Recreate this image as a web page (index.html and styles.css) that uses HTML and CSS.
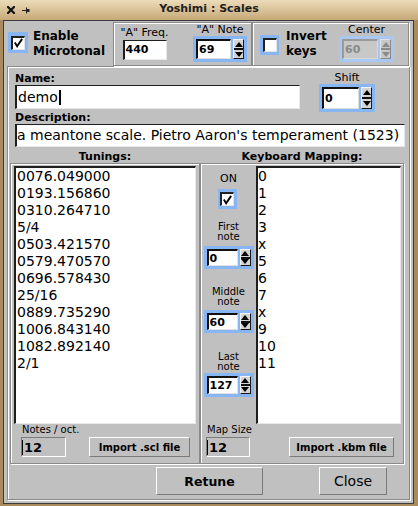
FILE: index.html
```
<!DOCTYPE html>
<html>
<head>
<meta charset="utf-8">
<link rel="stylesheet" href="styles.css">
</head>
<body>
<div class="titlebar">
  <div class="tb-icons">
    <svg class="tb-x" width="8" height="8" viewBox="0 0 8 8"><path d="M1 1L7 7M7 1L1 7" stroke="#111" stroke-width="2.2" stroke-linecap="square"/></svg>
    <svg class="tb-pin" width="8" height="7" viewBox="0 0 8 7"><path d="M0 3.5H4" stroke="#222" stroke-width="1"/><path d="M4.5 0.5V6.5" stroke="#222" stroke-width="1"/><rect x="5" y="2" width="2.5" height="3" fill="#222"/></svg>
  </div>
  <div class="title">Yoshimi : Scales</div>
  <div></div>
</div>
<div class="client">
  <div class="top">
    <div class="enable">
      <div class="cb cb-en"><div class="cbox"><svg width="12" height="12" viewBox="0 0 12 12"><path d="M2 5.5L4.5 9.5L10 1.5" stroke="#000" stroke-width="2" fill="none"/></svg></div></div>
      <div class="blbl">Enable<br>Microtonal</div>
    </div>
    <div class="grp grp1">
      <div class="freq">
        <div class="lbl">"A" Freq.</div>
        <div class="inp inp-freq">440</div>
      </div>
      <div class="note">
        <div class="lbl">"A" Note</div>
        <div class="spin spin-note"><div class="sv">69</div><div class="arr"><i class="u"></i><i class="d"></i></div></div>
      </div>
    </div>
    <div class="grp grp2">
      <div class="cb cb-inv"><div class="cbox"></div></div>
      <div class="blbl inv-lbl">Invert<br>keys</div>
      <div class="center">
        <div class="lbl">Center</div>
        <div class="spin spin-center dis"><div class="sv">60</div><div class="arr"><i class="u"></i><i class="d"></i></div></div>
      </div>
    </div>
  </div>

  <div class="panel">
    <div class="rowA">
      <div class="namecol">
        <div class="blbl2">Name:</div>
        <div class="inp name">demo<span class="caret"></span></div>
      </div>
      <div class="shiftcol">
        <div class="lbl">Shift</div>
        <div class="spin spin-shift"><div class="sv">0</div><div class="arr"><i class="u"></i><i class="d"></i></div></div>
      </div>
    </div>
    <div class="desc">
      <div class="blbl2">Description:</div>
      <div class="inp dinp">a meantone scale. Pietro Aaron's temperament (1523)</div>
    </div>

    <div class="cols">
      <div class="tcol">
        <div class="hdr">Tunings:</div>
        <div class="frame tframe">
          <div class="list tlist">
            <div>0076.049000</div>
            <div>0193.156860</div>
            <div>0310.264710</div>
            <div>5/4</div>
            <div>0503.421570</div>
            <div>0579.470570</div>
            <div>0696.578430</div>
            <div>25/16</div>
            <div>0889.735290</div>
            <div>1006.843140</div>
            <div>1082.892140</div>
            <div>2/1</div>
          </div>
          <div class="fbot tbot">
            <div class="outcol">
              <div class="lbl10">Notes / oct.</div>
              <div class="out"><span class="ocaret"></span>12</div>
            </div>
            <div class="btn ibtn scl">Import .scl file</div>
          </div>
        </div>
      </div>
      <div class="mcol">
        <div class="hdr">Keyboard Mapping:</div>
        <div class="frame mframe">
          <div class="mtop">
            <div class="midcol">
              <div class="lbl on-lbl">ON</div>
              <div class="cb cb-on"><div class="cbox"><svg width="12" height="12" viewBox="0 0 12 12"><path d="M2 5.5L4.5 9.5L10 1.5" stroke="#000" stroke-width="2" fill="none"/></svg></div></div>
              <div class="lbl10 nl nl-first">First<br>note</div>
              <div class="spin spin-sm s1"><div class="sv">0</div><div class="arr"><i class="u"></i><i class="d"></i></div></div>
              <div class="lbl10 nl nl-mid">Middle<br>note</div>
              <div class="spin spin-sm s2"><div class="sv">60</div><div class="arr"><i class="u"></i><i class="d"></i></div></div>
              <div class="lbl10 nl nl-last">Last<br>note</div>
              <div class="spin spin-sm s3"><div class="sv">127</div><div class="arr"><i class="u"></i><i class="d"></i></div></div>
            </div>
            <div class="list mlist">
              <div>0</div>
              <div>1</div>
              <div>2</div>
              <div>3</div>
              <div>x</div>
              <div>5</div>
              <div>6</div>
              <div>7</div>
              <div>x</div>
              <div>9</div>
              <div>10</div>
              <div>11</div>
            </div>
          </div>
          <div class="fbot mbot">
            <div class="outcol outcol-m">
              <div class="lbl10">Map Size</div>
              <div class="out"><span class="ocaret"></span>12</div>
            </div>
            <div class="btn ibtn kbm">Import .kbm file</div>
          </div>
        </div>
      </div>
    </div>

    <div class="btns">
      <div class="btn retune">Retune</div>
      <div class="btn close">Close</div>
    </div>
  </div>
</div>
</body>
</html>
```
FILE: styles.css
```
* { box-sizing: border-box; }

body {
  margin: 0;
  width: 418px;
  height: 506px;
  overflow: hidden;
  background: #a98b5e;
  font-family: "DejaVu Sans", sans-serif;
  color: #000;
}

/* title bar */
.titlebar {
  height: 20px;
  background: linear-gradient(#ecdcba, #c6a878);
  display: grid;
  grid-template-columns: 1fr auto 1fr;
}
.tb-icons {
  display: flex;
  align-items: center;
  padding-left: 7px;
  gap: 7px;
}
.title {
  font-weight: bold;
  font-size: 11px;
  line-height: 13px;
  padding-top: 2px;
  color: #1e1e1e;
}

/* client area */
.client {
  margin-left: 3px;
  width: 411px;
  height: 484px;
  border: 1px solid #3b3b3b;
  background: #c0c0c0;
}

.top {
  display: flex;
  height: 45px;
}

.lbl {
  font-size: 11px;
  font-weight: normal;
  line-height: 13px;
  white-space: nowrap;
  text-align: center;
}
.lbl10 {
  font-size: 10px;
  line-height: 12px;
  white-space: nowrap;
}
.blbl {
  font-size: 12px;
  font-weight: bold;
  line-height: 15px;
  white-space: nowrap;
}
.blbl2 {
  font-size: 11px;
  font-weight: bold;
  line-height: 13px;
}

/* groove frames */
.grp, .panel, .frame {
  border: 1px solid #8a8a8a;
  box-shadow: inset 1px 1px 0 #fff, 1px 1px 0 #fff;
}

/* checkboxes */
.cb {
  background: #88b6f2;
  display: flex;
  align-items: center;
  justify-content: center;
  flex: none;
}
.cbox {
  width: 14px;
  height: 14px;
  background: #fff;
  border-style: solid;
  border-width: 2px 1px 1px 2px;
  border-color: #222 #e4e4e4 #e4e4e4 #222;
  display: flex;
  align-items: center;
  justify-content: center;
}
.cbox svg { display: block; }

.enable {
  width: 109px;
  display: flex;
  align-items: flex-start;
  padding: 8px 0 0 4px;
  gap: 5px;
}
.cb-en {
  width: 20px;
  height: 21px;
  margin-top: 3px;
}

.grp1 {
  margin-top: 1px;
  width: 139px;
  height: 44px;
  display: flex;
  align-items: flex-start;
}
.freq {
  width: 61px;
  display: flex;
  flex-direction: column;
  align-items: center;
  padding-top: 3px;
}
.inp {
  background: #fff;
  border-style: solid;
  border-width: 1px 1px 1px 2px;
  border-color: #1e1e1e #e8e8e8 #e8e8e8 #1e1e1e;
  white-space: nowrap;
  overflow: hidden;
}
.inp-freq {
  margin-top: 1px;
  width: 44px;
  height: 20px;
  font-size: 11px;
  font-weight: bold;
  line-height: 18px;
  padding-left: 1px;
}
.note {
  margin-left: 18px;
  width: 54px;
  display: flex;
  flex-direction: column;
  align-items: center;
  padding-top: 0;
}

/* spinners */
.spin {
  display: flex;
  background: #88b6f2;
  padding: 3px;
  gap: 2px;
  flex: none;
}
.sv {
  flex: 1;
  background: #fff;
  border-style: solid;
  border-width: 2px 1px 1px 2px;
  border-color: #111 #e0e0e0 #e0e0e0 #111;
  font-size: 11px;
  font-weight: bold;
  display: flex;
  align-items: center;
  padding-left: 1px;
  line-height: 1;
}
.arr {
  width: 11px;
  display: flex;
  flex-direction: column;
  background: #d4d4d4;
  border: 1px solid #1a1a1a;
  border-top-color: #f4f4f4;
  border-left-color: #f4f4f4;
}
.arr i {
  flex: 1;
  display: flex;
  align-items: center;
  justify-content: center;
}
.arr i + i { border-top: 2px solid #111; }
.arr .u::before {
  content: "";
  border-left: 4px solid transparent;
  border-right: 4px solid transparent;
  border-bottom: 5px solid #000;
}
.arr .d::before {
  content: "";
  border-left: 4px solid transparent;
  border-right: 4px solid transparent;
  border-top: 5px solid #000;
}
.spin-note { width: 54px; height: 26px; }
.spin-center { width: 55px; height: 26px; }
.spin-shift { width: 56px; height: 28px; }
.spin-sm { width: 50px; height: 23px; }

.dis { background: #a8c8f2; }
.dis .sv {
  background: #c8c8c8;
  color: #8a8a8a;
  border-color: #9a9a9a #d8d8d8 #d8d8d8 #9a9a9a;
}
.dis .arr { background: #c8c8c8; border-color: #e0e0e0 #8a8a8a #8a8a8a #e0e0e0; }
.dis .arr i + i { border-top-color: #8a8a8a; }
.dis .arr .u::before { border-bottom-color: #8a8a8a; }
.dis .arr .d::before { border-top-color: #8a8a8a; }

.grp2 {
  margin-top: 1px;
  width: 157px;
  height: 44px;
  display: flex;
  align-items: flex-start;
}
.cb-inv {
  width: 19px;
  height: 20px;
  margin: 12px 0 0 7px;
}
.inv-lbl {
  width: 53px;
  margin: 6px 0 0 7px;
}
.center {
  width: 55px;
  display: flex;
  flex-direction: column;
  align-items: center;
}

/* main panel */
.panel {
  margin-left: 3px;
  width: 403px;
  height: 434px;
}
.rowA {
  display: flex;
  height: 44px;
}
.namecol {
  margin-left: 7px;
  width: 285px;
  padding-top: 5px;
}
.name {
  width: 285px;
  height: 24px;
  font-size: 14px;
  line-height: 20px;
  padding-left: 1px;
  display: flex;
  align-items: center;
}
.caret {
  display: inline-block;
  width: 2px;
  height: 15px;
  background: #000;
  margin-left: 1px;
}
.shiftcol {
  margin-left: 19px;
  width: 56px;
  padding-top: 4px;
  display: flex;
  flex-direction: column;
  align-items: center;
}
.desc {
  margin-left: 7px;
}
.dinp {
  width: 390px;
  height: 23px;
  font-size: 14px;
  line-height: 20px;
  padding-left: 0;
}

.cols {
  display: flex;
  margin-top: 3px;
}
.hdr {
  height: 13px;
  font-size: 11px;
  font-weight: bold;
  line-height: 13px;
  text-align: center;
}
.tcol {
  margin-left: 2px;
  width: 190px;
}
.mcol {
  width: 204px;
}
.frame {
  height: 301px;
}
.list {
  background: #fff;
  border-style: solid;
  border-width: 2px 1px 1px 2px;
  border-color: #1e1e1e #e8e8e8 #e8e8e8 #1e1e1e;
  height: 258px;
  font-size: 14px;
  line-height: 17px;
  white-space: nowrap;
  overflow: hidden;
}
.tlist {
  margin: 2px 0 0 3px;
  width: 182px;
  padding-left: 1px;
}
.fbot {
  display: flex;
  align-items: flex-end;
}
.tbot { margin-left: 10px; }
.outcol {
  width: 45px;
  display: flex;
  flex-direction: column;
}
.outcol .lbl10 { padding-left: 1px; }
.out {
  margin-top: 1px;
  height: 20px;
  background: #c0c0c0;
  border: 1px solid;
  border-color: #7c7c7c #fff #fff #7c7c7c;
  font-size: 13px;
  font-weight: bold;
  display: flex;
  align-items: center;
}
.ocaret {
  width: 1px;
  height: 15px;
  background: #000;
  margin-right: 1px;
}
.btn {
  background: #c0c0c0;
  border: 1px solid;
  border-color: #fff #7a7a7a #7a7a7a #fff;
  display: flex;
  align-items: center;
  justify-content: center;
  white-space: nowrap;
}
.ibtn {
  height: 20px;
  font-size: 10px;
  font-weight: bold;
}
.scl { margin-left: 23px; width: 101px; }

.mtop {
  display: flex;
  height: 260px;
}
.midcol {
  width: 55px;
  display: flex;
  flex-direction: column;
  align-items: center;
}
.on-lbl { margin-top: 8px; }
.cb-on {
  width: 19px;
  height: 20px;
  margin: 4px 3px 0 0;
}
.nl {
  line-height: 10px;
  text-align: center;
}
.nl-first { margin-top: 13px; }
.s1 { margin-top: 4px; }
.nl-mid { margin-top: 18px; }
.s2 { margin-top: 3px; }
.nl-last { margin-top: 19px; }
.s3 { margin-top: 1px; height: 24px; }

.mlist {
  margin-top: 2px;
  width: 145px;
  padding-left: 0;
}
.mbot { margin-left: 5px; }
.outcol-m { width: 44px; }
.kbm { margin-left: 39px; width: 105px; }

.btns {
  display: flex;
  margin-top: 3px;
}
.retune {
  margin-left: 148px;
  width: 107px;
  height: 28px;
  font-size: 12.5px;
  font-weight: bold;
}
.close {
  margin-left: 56px;
  width: 68px;
  height: 28px;
  font-size: 14px;
}
```
